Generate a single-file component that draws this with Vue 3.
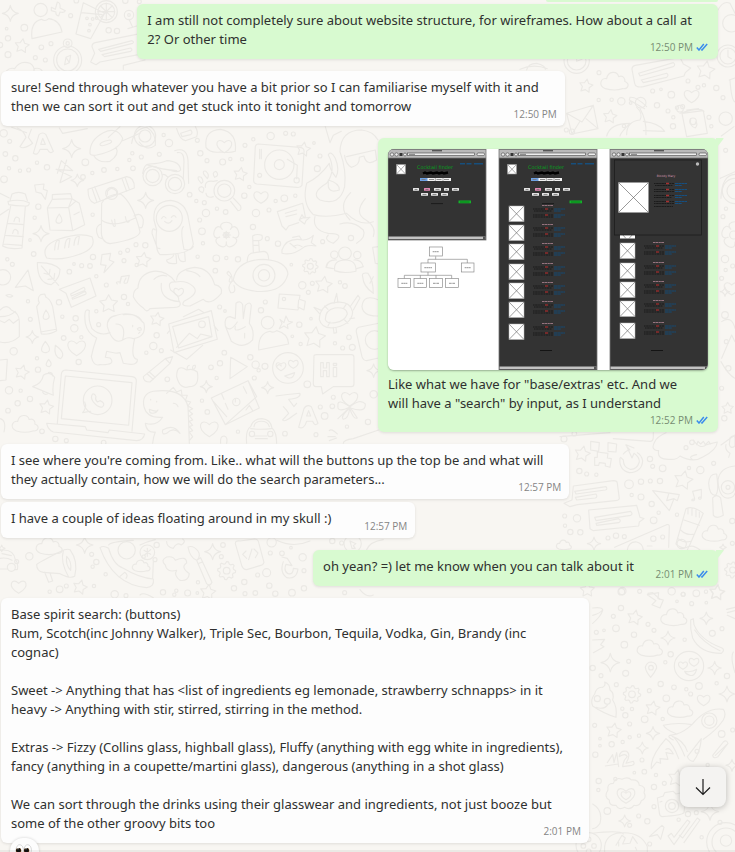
<script setup>
const messages = [
  { id: 1, side: 'out', size: 'wide', time: '12:50 PM', text: 'I am still not completely sure about website structure, for wireframes. How about a call at\n2? Or other time' },
  { id: 2, side: 'in', size: 'wide', time: '12:50 PM', text: 'sure! Send through whatever you have a bit prior so I can familiarise myself with it and\nthen we can sort it out and get stuck into it tonight and tomorrow' },
  { id: 3, side: 'out', size: 'media', tail: true, image: true, time: '12:52 PM', text: 'Like what we have for "base/extras\' etc. And we\nwill have a "search" by input, as I understand' },
  { id: 4, side: 'in', size: 'wide', time: '12:57 PM', text: "I see where you're coming from. Like.. what will the buttons up the top be and what will\nthey actually contain, how we will do the search parameters..." },
  { id: 5, side: 'in', size: 'short', follow: true, time: '12:57 PM', text: 'I have a couple of ideas floating around in my skull :)' },
  { id: 6, side: 'out', size: 'short', tail: true, time: '2:01 PM', text: 'oh yean? =) let me know when you can talk about it' },
  { id: 7, side: 'in', size: 'wide', reaction: true, time: '2:01 PM', text: 'Base spirit search: (buttons)\nRum, Scotch(inc Johnny Walker), Triple Sec, Bourbon, Tequila, Vodka, Gin, Brandy (inc\ncognac)\n\nSweet -> Anything that has <list of ingredients eg lemonade, strawberry schnapps> in it\nheavy -> Anything with stir, stirred, stirring in the method.\n\nExtras -> Fizzy (Collins glass, highball glass), Fluffy (anything with egg white in ingredients),\nfancy (anything in a coupette/martini glass), dangerous (anything in a shot glass)\n\nWe can sort through the drinks using their glasswear and ingredients, not just booze but\nsome of the other groovy bits too' },
]

const frames = [
  { x: 0, h: 91, rows: [] },
  { x: 111, h: 221, rows: [57, 76, 95, 115, 134, 153, 175] },
  { x: 222, h: 221, modal: true, rows: [94, 114, 133, 152, 174] },
]
const chips = [[25, 39, 6], [36, 39, 6, 1], [46, 39, 7], [56, 39, 5], [64, 39, 7], [33, 44, 7], [43, 44, 7], [53, 44, 7]]
const treeBoxes = [[148, 336, 39], [123, 384, 43], [244, 384, 38], [54, 431, 38], [102, 431, 38], [149, 431, 38], [197, 431, 38]]

/* Doodle helpers: each returns path data around a centre */
function polar(cx, cy, r, deg) {
  const a = (deg * Math.PI) / 180
  return `${(cx + r * Math.cos(a)).toFixed(1)} ${(cy + r * Math.sin(a)).toFixed(1)}`
}
function star([x, y, r, rot = 0]) {
  let d = ''
  for (let i = 0; i < 10; i++) d += (i ? 'L' : 'M') + polar(x, y, i % 2 ? r * 0.52 : r, -90 + rot + i * 36)
  return d + 'Z'
}
function spark([x, y, r]) {
  let d = `M${x} ${y - r}`
  for (let i = 1; i <= 4; i++) d += `Q${polar(x, y, r * 0.22, -225 + i * 90 + 90)} ${polar(x, y, r, -90 + i * 90)}`
  return d + 'Z'
}
function heart([x, y, r]) {
  return `M${x} ${y + r}C${x - r * 1.9} ${y} ${x - r} ${y - r * 1.5} ${x} ${y - r * 0.5}C${x + r} ${y - r * 1.5} ${x + r * 1.9} ${y} ${x} ${y + r}Z`
}
function cloud([x, y, r]) {
  return `M${x - r * 0.7} ${y + r * 0.55}C${x - r * 1.3} ${y + r * 0.3} ${x - r} ${y - r * 0.3} ${x - r * 0.6} ${y - r * 0.2}C${x - r * 0.5} ${y - r * 0.8} ${x + r * 0.2} ${y - r * 0.8} ${x + r * 0.3} ${y - r * 0.35}C${x + r * 0.7} ${y - r * 0.5} ${x + r * 0.8} ${y - r * 0.1} ${x + r * 0.75} ${y}C${x + r * 1.2} ${y + r * 0.2} ${x + r} ${y + r * 0.6} ${x + r * 0.6} ${y + r * 0.55}Q${x} ${y + r * 0.75} ${x - r * 0.7} ${y + r * 0.55}Z`
}
function flower([x, y, r]) {
  let d = ''
  for (let i = 0; i < 5; i++) {
    const a = -90 + i * 72
    d += `${i ? 'L' : 'M'}${polar(x, y, r * 0.45, a - 36)}C${polar(x, y, r * 1.25, a - 38)} ${polar(x, y, r * 1.25, a + 38)} ${polar(x, y, r * 0.45, a + 36)}`
  }
  return d + 'Z'
}
function gear([x, y, r]) {
  let d = ''
  for (let i = 0; i < 32; i++) d += (i ? 'L' : 'M') + polar(x, y, i % 4 < 2 ? r : r * 0.78, i * 11.25)
  return d + 'Z'
}

const patches = [
  {
    x: 0, y: 120,
    dots: [[11, 40, 11], [29, 64, 6], [16, 102, 7], [46, 115, 8], [27, 145, 5], [60, 152, 5], [86, 150, 6], [12, 178, 10], [111, 128, 5], [141, 142, 8], [256, 127, 10], [277, 159, 5], [249, 171, 7], [312, 150, 7], [352, 147, 5], [399, 145, 7], [388, 120, 5], [397, 100, 5], [424, 111, 6], [478, 103, 6], [507, 69, 11], [491, 45, 5], [592, 61, 6], [601, 100, 8], [621, 122, 6], [668, 126, 9], [691, 117, 5], [726, 118, 5], [735, 76, 6], [760, 58, 5], [812, 48, 11], [857, 40, 6], [880, 42, 6], [942, 69, 4], [960, 108, 6], [952, 146, 9], [115, 260, 8], [104, 293, 5], [278, 284, 5], [90, 360, 4], [101, 402, 7], [22, 418, 5], [37, 433, 6], [279, 411, 8], [222, 432, 4], [245, 437, 6], [270, 438, 7], [208, 455, 7], [289, 469, 5], [319, 495, 6], [361, 398, 5], [383, 391, 6], [408, 374, 6], [436, 376, 8], [372, 422, 6], [410, 435, 5], [569, 224, 7], [589, 243, 5], [613, 248, 6], [618, 279, 11], [599, 300, 6], [606, 334, 10], [609, 370, 5], [593, 410, 5], [651, 266, 5], [677, 276, 7], [649, 415, 10], [679, 414, 5], [646, 452, 7], [714, 418, 8], [748, 201, 5], [733, 227, 8], [827, 243, 5], [853, 235, 10], [886, 227, 5], [768, 279, 11], [807, 270, 6], [759, 321, 8], [802, 356, 6], [834, 371, 8], [874, 434, 4], [968, 365, 6], [1053, 354, 8], [907, 496, 11], [937, 490, 6], [925, 517, 6], [1020, 487, 5], [1035, 498, 7], [84, 544, 5], [177, 547, 8], [91, 598, 6], [187, 590, 5], [227, 595, 8], [296, 614, 6], [289, 574, 5], [223, 625, 11], [191, 654, 7], [244, 652, 5], [41, 694, 11], [111, 715, 5], [114, 749, 8], [236, 726, 8], [372, 531, 8], [384, 552, 5], [470, 646, 8], [460, 678, 11], [439, 698, 5], [484, 692, 6], [659, 561, 6], [675, 573, 4], [783, 571, 8], [796, 546, 6], [898, 614, 8], [933, 596, 4], [877, 649, 4], [902, 672, 5], [1047, 652, 7], [1005, 670, 5], [1028, 684, 6], [1057, 682, 9], [633, 742, 7], [660, 730, 8], [673, 698, 7], [751, 712, 8], [767, 734, 11], [776, 751, 5], [763, 774, 6], [795, 739, 9], [650, 774, 5], [502, 778, 7], [62, 812, 5], [27, 811, 11], [90, 837, 8], [53, 850, 8], [24, 872, 7], [922, 793, 10], [974, 888, 10], [961, 861, 6], [997, 859, 7], [1000, 832, 6], [1041, 920, 5], [948, 944, 6], [126, 934, 7], [166, 957, 8], [199, 962, 6], [311, 968, 7], [606, 842, 5], [622, 876, 7], [714, 935, 5], [855, 941, 7], [1104, 906, 8], [1121, 823, 11]],
    stars: [[721, 163, 21, 10], [910, 88, 22, 10], [430, 420, 23, 8], [326, 552, 28], [471, 598, 21, 10], [971, 495, 26, 8], [944, 653, 33, 8], [66, 757, 22, 15], [139, 862, 22, 10]],
    sparks: [[215, 86, 27], [232, 181, 19], [437, 241, 24], [123, 341, 24], [97, 651, 19], [619, 800, 18], [803, 803, 18], [1121, 752, 20]],
    hearts: [[673, 78, 20], [783, 231, 19], [536, 516, 13], [230, 683, 24], [628, 926, 24], [843, 739, 13], [880, 732, 13], [1049, 836, 22]],
    clouds: [[76, 912, 38]],
    flowers: [[679, 345, 46]],
    gears: [[931, 439, 23]],
    rings: [[435, 48, 18], [435, 48, 32], [458, 168, 29], [458, 168, 20], [525, 192, 29], [525, 192, 20], [673, 212, 31], [673, 212, 20], [838, 134, 44], [838, 134, 15], [508, 295, 39], [792, 466, 33], [792, 466, 17], [679, 345, 8], [931, 439, 9], [1035, 400, 19], [1003, 404, 11], [1072, 405, 11], [803, 608, 19], [864, 744, 46], [293, 841, 43], [606, 613, 10], [709, 846, 11], [756, 942, 8], [811, 942, 8], [335, 220, 18], [852, 537, 5], [1124, 660, 28], [9, 472, 23], [779, 166, 6], [890, 181, 8]],
    d: [
      'M100 100L117 44Q128 34 138 44L160 94Q150 104 142 88H120Q114 108 100 100M122 73L128 55 136 73Z',
      'M35 22L80 38M52 24Q70 30 78 52L60 80Q70 90 98 70L85 52 94 28',
      'M270 100Q268 60 310 38Q350 18 368 55Q360 90 290 105Q272 108 270 100M300 74Q298 66 330 60Q340 64 330 70Q304 82 300 74M282 108Q295 130 330 124Q360 104 348 82M325 52L360 20M368 62L420 40',
      'M395 70Q402 26 440 22Q470 40 466 76Q440 96 418 66',
      'M530 26Q540 60 556 62L590 50Q596 36 586 20M542 40L572 30Q580 38 572 44L546 50Z',
      'M618 82Q612 30 662 28Q712 36 706 94Q690 100 660 96Q630 100 618 82Z',
      'M775 72L900 82Q914 84 912 96L906 196Q902 204 890 202L770 192Q760 190 761 180L766 80Q768 72 775 72ZM862 118L892 136 890 176M779 88V116M784 88V116',
      'M1020 95Q1022 30 1085 30Q1120 34 1134 60M1020 95Q1040 150 1034 200Q1020 260 960 240Q930 220 980 190Q1010 150 985 105Q992 90 1006 115Q1020 150 1008 172Q990 150 988 130Q960 170 920 190Q905 250 940 284Q980 295 1040 280Q1080 320 1120 305M1040 110L1126 90 1130 120Q1100 140 1092 108L1078 112Q1080 136 1054 142Q1036 130 1034 106M945 290Q935 330 985 340Q1040 340 1000 370Q970 360 985 345M1020 312Q1060 300 1090 330Q1100 350 1070 370M985 180Q1020 190 1018 210Q990 220 985 200ZM1052 218Q1010 260 1050 300M1096 236Q1060 280 1098 300Q1130 320 1120 350',
      'M172 160L184 122 218 152 168 148 215 170 180 188 200 120M104 195L132 192 130 208 142 212 136 238 124 220 108 216Z',
      'M30 242L36 222Q56 212 76 222L82 242M24 244Q60 236 88 248Q88 260 74 258Q46 258 26 254ZM32 258L8 378Q30 390 66 384L76 260M22 310L72 314M16 346L70 350M10 372L66 376M42 304Q46 284 58 296V305M38 340Q42 320 54 334V342M0 220L28 234M0 285L26 268',
      'M157 238V224L212 221 216 236M157 238L142 264 150 330 218 332 254 314 238 250 216 236ZM142 264L206 262 216 236M206 262L218 332M206 262L226 245M178 282Q158 310 178 310Q194 306 178 282ZM222 284L238 276',
      'M140 414Q120 380 175 358Q240 336 276 350Q290 380 250 398Q190 424 140 414ZM164 390Q165 358 178 362L174 388M194 384Q196 352 210 356L206 382M222 376Q224 346 238 350L234 374',
      'M264 208L380 170Q404 172 403 204L284 250Q264 246 264 208ZM276 204L290 244M284 200L300 240M376 174L388 208M366 176L380 214M305 250Q320 222 362 222Q400 250 420 335Q420 356 330 371Q302 366 304 330ZM304 300Q340 326 406 294M335 300Q340 325 346 318L344 298M376 290Q380 314 388 304M304 312Q280 320 296 352L306 356M402 288Q424 274 430 300Q430 330 418 322M322 224V214Q334 196 350 214V224',
      'M428 160Q432 130 450 132Q480 130 500 122Q540 124 542 150Q534 160 508 150M488 164Q494 160 504 172M524 92Q560 80 564 120L566 190M532 98Q552 94 552 124L550 176M440 134Q490 150 530 152',
      'M616 202Q614 180 640 184L652 182M640 230Q620 236 618 220M692 244L714 272Q726 272 722 258L700 234M612 164Q606 150 618 154Q630 164 622 176ZM644 172Q634 158 648 154Q660 166 644 172ZM596 180Q590 166 604 172Q614 186 604 190ZM600 214Q590 202 606 200Q616 204 608 218Z',
      'M462 300Q458 244 512 241Q560 246 566 300L580 372Q576 404 480 404Q464 390 470 330ZM456 340Q456 320 466 330M456 340L472 384L480 386M550 320Q540 330 552 388Q570 394 580 380M520 402Q524 412 500 420Q500 434 530 430L528 404M534 402Q536 430 556 424L554 396M485 296Q490 284 498 294M514 292Q522 282 528 292M494 304Q506 316 516 302',
      'M672 338L688 352M688 338L672 352M679 334V356M668 345H692',
      'M700 480Q710 420 790 418Q860 422 864 462Q850 520 770 514Q714 508 700 480ZM742 426Q740 398 764 398L792 394Q806 396 806 418M760 396L758 348Q770 340 786 346Q790 362 776 362L778 394M760 362H776M760 376H776M700 482Q680 494 692 470Q674 460 686 454Q698 464 696 484Q680 500 692 518Q710 520 702 496',
      'M832 275L908 250 916 290 900 298M832 275L846 318 858 330 866 318 896 308M856 280L890 270M858 290L890 282M898 300L906 284 912 294 930 292 918 302 914 312 906 306Z',
      'M846 390Q860 350 910 360Q930 358 940 346L934 368 948 378Q930 374 914 380Q880 408 846 400ZM878 352L898 348 904 358M870 370L888 384M880 380Q892 370 906 380',
      'M1004 452Q1000 420 1036 420Q1070 420 1068 454Q1030 462 1004 452ZM980 440Q984 418 1010 420M990 424Q980 428 978 442L1000 446M1062 420Q1084 418 1090 440L1070 446',
      'M84 450L100 512 76 498 46 502ZM112 428Q160 426 180 448Q180 476 154 494Q112 490 112 428ZM124 438L176 496M132 460L148 464 150 448M144 478L162 476 164 460',
      'M178 508L270 474 288 528 214 562 198 520ZM212 522L252 502Q258 508 252 512L214 528ZM216 534L256 514Q262 522 254 524L218 538Z',
      'M306 404L332 400 328 420 342 426 312 458 318 436 302 434ZM352 492Q344 484 360 486L364 470 388 466 382 488Q368 494 374 482L378 474M364 474L360 490',
      'M400 530Q400 510 414 504Q416 462 460 454Q500 450 526 486Q500 484 512 510Q540 530 536 540Q550 560 524 562L450 566Q440 580 430 564Q410 550 400 530ZM526 486Q560 480 580 500Q600 520 552 544Q540 560 570 558L610 538Q630 560 664 520Q670 500 644 494Q630 444 584 442Q530 450 530 480M484 490Q478 540 538 545M462 478Q480 462 500 468M560 452Q590 456 600 470',
      'M118 548Q110 534 122 524L134 522 138 532Q150 536 158 560L170 632Q150 644 124 642L110 560ZM138 570Q120 600 140 598Q156 594 138 570ZM122 636L168 628',
      'M0 570Q20 550 34 570Q58 580 58 604V650Q30 674 0 666M0 602L14 608 28 598 40 610 56 598M0 590Q30 590 46 574M18 526Q30 520 38 528Q30 536 18 526Z',
      'M268 572Q250 560 256 610Q262 640 290 654Q280 680 274 710Q280 740 300 734Q350 736 330 714L316 712 320 694Q350 702 360 698L370 730Q414 740 412 718Q390 716 404 656M268 572Q264 600 276 626Q300 650 330 638M322 620Q320 590 350 586Q400 570 432 610Q440 650 400 656Q384 650 372 658Q340 680 322 620ZM348 612Q380 612 368 660M370 584Q410 580 424 600M412 626Q424 618 424 630Q414 634 412 626ZM398 616V620M420 636L416 640',
      'M506 612L634 572 652 658 522 698ZM518 620L626 590 636 650 536 684ZM530 682L568 640 592 656 602 642 634 650M550 590L596 568 612 578M502 640L510 630M512 690L560 718 608 676M642 616L654 632',
      'M676 618Q672 590 690 590L706 596 708 550Q722 540 728 554L730 596 736 556Q750 542 754 556L748 610Q764 630 758 660Q730 690 694 664ZM676 618Q690 640 712 606M706 620Q700 640 736 620M734 640V654',
      'M776 690Q774 640 810 634Q820 640 830 632Q864 640 866 672ZM840 598L852 608 858 588 866 604 878 606 862 614 864 626 852 618 838 626 846 610Z',
      'M838 522L900 526 898 538 916 544 912 570 896 562 894 570 834 564ZM896 540L894 562',
      'M958 598Q960 556 1002 548Q1050 540 1058 576Q1056 610 1010 622Q966 630 958 598ZM976 598Q976 570 1004 564Q1040 560 1042 582Q1034 604 1006 608Q980 612 976 598ZM1002 550L1010 520 1014 548M1052 558L1074 526 1080 534 1060 570M966 572L942 562 958 580M1000 622L1002 640 1010 638 1008 622M1050 596L1064 594M984 568L974 558M1030 566L1038 554M1034 600L1044 610M990 606L984 618',
      'M136 664Q112 698 138 698Q160 694 136 664ZM166 676Q160 710 182 716Q200 700 166 676ZM146 718Q130 740 148 740Q160 734 146 718Z',
      'M430 770L496 716 518 710 510 730 450 786Q430 786 430 770ZM442 762L460 778M448 756L466 772M496 716L510 730M560 750Q530 730 530 770Q540 810 568 800Q600 800 592 756Q580 744 560 750ZM562 750Q560 738 568 736M578 748Q576 734 586 736Q588 746 578 748Z',
      'M692 712L742 740 690 776ZM942 708Q942 704 950 704H1054Q1062 704 1062 712V792Q1062 800 1054 800H1000L968 822 964 800H948Q940 800 940 790ZM962 728H970V744H980V728H988V770H980V752H970V770H962ZM1000 742H1010V770H1000ZM1000 730H1010V736H1000Z',
      'M98 800Q126 790 130 766Q148 752 164 772Q156 800 160 826ZM128 816Q132 826 142 822M144 760Q146 754 156 760L158 768M0 720L22 718 18 780 0 782M0 896Q20 900 12 936',
      'M172 910L184 762Q186 750 198 750L396 770Q410 772 409 784L396 934M184 896L196 768 396 788 386 916ZM140 910L256 920 260 930 324 938 328 930 434 942Q430 962 410 962L160 936Q144 930 140 910ZM248 878Q262 862 254 846M248 878L272 874',
      'M278 822Q270 832 280 846Q296 866 308 860Q318 850 300 842L292 846Q284 838 288 830Q284 820 278 822Z',
      'M432 860Q424 822 460 814Q550 802 564 860Q566 900 568 970M432 860Q440 896 488 892Q470 920 436 910Q440 940 466 936Q460 950 458 970M448 868Q470 878 474 870Q466 884 450 878ZM500 820L520 802 530 816 544 810 546 826 562 826 556 842 572 846 564 858 578 866 566 872 578 882 568 888 578 900 568 904 578 916 568 920 578 932 568 936 578 950 570 960M520 850Q530 850 534 860M488 930Q520 910 540 940M540 940Q520 920 500 940Q484 946 488 930M452 838V840M470 844V846',
      'M634 834L744 782 778 864 676 914ZM664 820L672 838M676 850L684 868M640 844L680 890M744 782L770 830 676 914M738 870L748 856 758 872M706 838V846M730 800L740 820',
      'M832 738Q836 730 844 738M854 768Q870 764 884 758Q880 776 866 774Z',
      'M740 970Q736 930 752 920Q760 896 786 896Q812 898 816 924Q830 936 830 970M752 926Q784 930 814 926M762 920Q764 904 784 904Q804 904 808 920M764 948H800M766 956H802',
      'M828 828Q860 824 900 820Q904 834 866 838L882 860 890 850M850 860Q860 870 866 880L848 900Q854 908 878 888L890 880M896 922L912 866Q920 852 934 860L954 910Q944 920 938 904H920Q912 930 896 922ZM920 888L926 872 932 888Z',
      'M1049 860Q1012 834 1014 856Q1010 880 1049 862Q1080 834 1096 852Q1098 880 1052 864M1049 864Q1020 890 1030 898Q1046 896 1049 864M1049 864Q1060 900 1072 894L1052 864M1049 862L1014 896',
      'M1136 610L1076 622Q1066 626 1070 640L1086 710Q1090 722 1100 722L1136 714M1136 380L1118 382 1126 430 1136 432M1088 470Q1090 500 1120 520M1088 470Q1084 456 1104 460Q1120 480 1120 520M1120 470L1110 490M1136 540Q1090 520 1086 560Q1090 590 1136 588',
      'M988 932Q994 924 1012 942M984 950H1006M988 962L1010 954M1030 970Q1030 960 1060 956L1136 930M662 970Q660 948 672 948Q684 950 680 970M976 20L990 68 1000 46 1024 34M178 24L188 40 262 26',
    ],
  },
  {
    x: 560, y: 430,
    dots: [[12, 27, 9], [43, 11, 7], [58, 123, 8], [80, 132, 6], [109, 134, 5], [270, 87, 8], [278, 109, 6], [308, 115, 10], [207, 163, 13], [243, 155, 8], [271, 153, 6], [300, 153, 8], [215, 195, 5], [243, 201, 9], [275, 222, 8], [281, 271, 10], [296, 248, 5], [387, 114, 5], [421, 120, 11], [378, 53, 6], [396, 37, 7], [461, 100, 6], [351, 254, 5], [14, 258, 6], [51, 265, 11], [31, 306, 8], [61, 307, 8], [15, 287, 5], [144, 324, 6], [168, 317, 8], [193, 320, 6], [280, 326, 8], [308, 321, 6], [517, 340, 6], [517, 273, 8], [239, 484, 6], [335, 484, 11], [370, 493, 6], [409, 490, 10], [438, 485, 5], [187, 483, 11]],
    stars: [[67, 72, 24, 12], [370, 151, 29, 12], [471, 488, 22, 8]],
    sparks: [[102, 341, 20], [489, 352, 10]], hearts: [], clouds: [[464, 310, 36], [12, 345, 22]], flowers: [], gears: [[518, 420, 24]],
    rings: [[504, 172, 20], [504, 172, 6], [518, 420, 9], [365, 342, 14]],
    d: [
      'M92 34L118 38 116 64 92 60ZM144 38L170 42 168 66 144 64ZM112 66L144 70 142 84 154 86 150 112 136 108 136 100 118 98 116 106 104 106 104 82 112 82Z',
      'M180 84Q176 120 208 128Q246 126 248 92Q244 74 232 68M190 72Q200 60 210 60L198 46M222 54L198 44 216 84 222 70Q238 80 238 96Q230 120 210 118Q190 112 190 90L182 82',
      'M40 168L160 152Q172 152 172 160L178 206Q176 212 166 212L52 224 30 230 12 220 36 210ZM44 184L138 170Q144 178 136 180L48 192ZM46 202L108 192Q114 200 106 204L50 210Z',
      'M86 240L230 226 240 262 252 266 238 276 236 288 100 302 90 296ZM104 262L212 244Q220 252 212 256L108 272ZM108 280L176 266Q186 272 176 278L110 286Z',
      'M278 182L358 194 352 212 342 206 328 242ZM326 192L320 212 342 206M404 206L398 184 424 178 424 202M404 208Q394 206 396 212Q404 214 404 206ZM424 202Q414 200 416 206Q424 210 424 202Z',
      'M378 236Q400 226 430 250L388 348Q370 362 348 342ZM384 236V252M396 236V256M408 240V260M418 246V262M372 270L418 286M362 300Q380 318 404 312M354 326Q370 340 392 334',
      'M164 352L320 284Q328 282 328 290L326 352M0 20L150 8M160 26L270 34Q280 34 280 20V8M202 360Q206 334 230 336Q248 340 250 360M262 348H276',
      'M284 36Q270 60 296 62Q290 90 330 88Q350 90 360 78Q400 100 430 80Q470 60 472 36L440 44Q420 60 400 30M318 8Q290 20 284 36M410 44L414 34 422 42 430 34 436 44 446 34 452 42M400 90Q380 80 410 74M498 44Q494 60 510 70M510 24Q520 14 525 22V48Q512 58 508 44ZM510 70L506 82',
      'M474 150Q480 112 525 108M474 150Q476 200 500 204Q520 206 525 190M470 132Q448 130 446 160Q448 196 466 196Q476 190 472 150ZM458 204L460 256Q470 268 490 256L482 204Q470 190 458 204Z',
      'M264 490L278 488 300 508M380 366L386 350Q400 344 420 360',
    ],
  },
  {
    x: 560, y: 590,
    dots: [[184, 5, 10], [183, 54, 8], [160, 79, 6], [132, 121, 4], [168, 115, 10], [109, 127, 6], [222, 134, 8], [193, 164, 10], [264, 103, 6], [282, 121, 6], [332, 193, 8], [316, 217, 5], [374, 149, 5], [369, 13, 6], [395, 41, 6], [439, 38, 4], [351, 34, 4], [457, 130, 9], [486, 116, 6], [98, 234, 8], [206, 214, 6], [123, 257, 6], [197, 250, 9], [169, 284, 6], [268, 302, 6], [302, 282, 8], [342, 292, 7], [379, 298, 5], [417, 288, 10], [392, 312, 6], [319, 325, 10], [470, 280, 5], [501, 258, 8], [187, 356, 5], [216, 357, 5], [196, 376, 8], [254, 388, 10], [308, 387, 5], [104, 406, 6], [120, 446, 4], [120, 467, 4], [209, 402, 6], [237, 437, 5], [209, 442, 5], [188, 456, 5], [155, 463, 8], [106, 494, 8], [246, 510, 6], [253, 545, 7], [223, 548, 4], [288, 555, 5], [116, 573, 8], [166, 567, 5], [115, 600, 5], [282, 591, 8], [313, 580, 6], [485, 432, 10], [411, 484, 6], [443, 525, 5], [142, 663, 10], [236, 678, 6], [282, 650, 6], [262, 694, 8], [209, 706, 6], [269, 762, 6], [384, 672, 8], [409, 668, 6], [425, 742, 5], [356, 689, 5], [480, 697, 6], [518, 420, 6]],
    stars: [[224, 83, 23, 12], [161, 422, 23, 10], [278, 355, 22, 10], [350, 565, 26, 10], [471, 8, 24, 8], [82, 0, 22, 0]],
    sparks: [[439, 85, 19], [324, 144, 21], [151, 218, 28], [464, 234, 20], [501, 312, 24], [279, 430, 20], [247, 474, 18], [194, 693, 18], [450, 665, 26], [516, 526, 18]],
    hearts: [[198, 616, 24], [198, 616, 13], [369, 226, 12], [402, 216, 13], [431, 330, 17]],
    clouds: [[342, 82, 38], [270, 175, 37], [361, 358, 37]],
    flowers: [], gears: [[216, 313, 26]],
    rings: [[216, 313, 10], [273, 233, 7], [387, 228, 44], [448, 392, 23], [448, 392, 14], [112, 326, 9], [142, 334, 9], [336, 648, 20], [336, 648, 10], [498, 756, 58], [498, 756, 42], [498, 752, 17], [86, 766, 38], [86, 748, 7], [70, 768, 7], [102, 768, 7], [86, 784, 7]],
    d: [
      'M262 14L296 8 294 26 310 30 300 54 276 44 288 32Z',
      'M392 90L400 86 402 104Q420 150 486 174Q496 180 484 190Q420 190 398 144Q390 116 392 90ZM404 120Q430 160 480 182',
      'M374 244Q396 248 410 238Q404 260 390 256Q378 254 374 244ZM256 232Q260 216 274 216Q290 218 290 234Q284 248 272 262Q258 246 256 232Z',
      'M98 348Q90 330 104 312Q110 290 128 292Q138 286 134 276Q150 282 150 300Q164 310 158 330Q172 350 168 382Q130 370 98 348ZM108 352Q130 360 142 346M98 150L134 148 122 164 132 170 100 188M98 54Q130 50 128 62Q122 80 98 100M98 76Q120 70 128 60',
      'M310 406Q350 396 396 404Q372 426 350 432Q318 420 310 406ZM352 432L330 436Q320 440 340 450M396 404Q440 350 490 358Q500 370 490 390Q470 420 430 448M424 446L382 500Q388 514 400 514Q420 490 424 446ZM330 436Q350 440 374 498M318 446Q340 460 356 506M274 536Q270 500 318 446M274 536L290 516 302 520 300 506 324 508 318 488 340 492Q330 470 318 478M338 440Q370 450 382 484',
      'M458 496L490 456Q500 448 504 460L474 500Q460 508 458 496ZM466 496L500 464M500 58L525 52M502 68L525 62M502 76L525 86M520 186Q510 200 525 248',
      'M142 518L158 494 162 518 170 488 176 530M136 528L174 522M178 500Q180 480 200 484Q214 494 198 520L220 514Q226 524 216 526L188 530Q190 510 202 500Q196 488 178 500Z',
      'M144 600Q140 580 160 580Q166 560 186 568Q204 558 214 570Q236 568 238 586Q260 590 252 608Q262 624 244 632Q240 650 222 646Q210 662 194 652Q176 662 168 646Q146 648 148 630Q130 620 144 600Z',
      'M292 624L310 618 314 608 340 604 348 612 374 606Q380 610 378 618L372 668Q366 676 306 680Q298 676 298 668ZM300 636L306 634',
      'M268 740L306 706 312 712 302 748 292 734ZM324 738L334 730 342 742 382 690 390 696 342 764ZM358 736L368 744 412 684 420 690 372 758',
      'M134 786Q130 740 170 730Q240 720 262 770V786M168 766L186 736 196 744 188 762 210 760 218 740 232 760M98 730Q180 720 190 732M98 642Q130 660 120 700Q110 716 98 716M176 756V768M226 772L230 780',
    ],
  },
  {
    x: 500, y: 0,
    dots: [[458, 273, 6], [483, 268, 4], [514, 284, 10], [564, 243, 6], [594, 262, 6], [612, 256, 5], [649, 264, 8], [669, 293, 6], [471, 316, 8], [504, 333, 6], [531, 323, 5], [548, 320, 6], [297, 218, 6], [296, 300, 5], [335, 299, 5], [364, 304, 11], [392, 309, 4], [372, 378, 5], [519, 379, 8], [540, 326, 10], [627, 352, 6], [634, 379, 5], [520, 352, 5], [199, 390, 6], [216, 395, 8]],
    stars: [[258, 258, 21, 10], [330, 350, 21, 8], [617, 211, 28, 10]],
    sparks: [], hearts: [[575, 288, 20]], clouds: [[344, 244, 40]], flowers: [], gears: [],
    rings: [[230, 182, 38], [230, 182, 28], [422, 308, 16], [684, 168, 33], [684, 168, 24], [579, 364, 10], [677, 356, 20], [694, 70, 26]],
    d: [
      'M396 208Q396 198 406 196L540 172 550 192 572 204 556 218 552 228 430 260Q406 264 404 250ZM416 220L520 188Q528 194 520 200L420 228ZM424 240L500 220Q508 226 500 232L430 248Z',
      'M200 340L280 316 294 386 216 402ZM200 340L246 366 280 316M216 402L240 364M294 386L258 356',
      'M390 292Q410 290 440 320M390 292L388 300 434 326M420 326Q440 360 438 404M410 322Q430 340 420 360Q380 364 380 404M430 364Q480 370 494 394L430 392M320 408Q330 370 390 370Q360 400 360 408',
      'M546 340L610 332 622 400 560 410ZM560 330L596 326M572 356Q568 380 586 384Q596 370 586 366M540 340Q600 320 612 334M684 150V170L694 176M230 168V184L246 178M664 408L702 380',
      'M80 210Q84 190 110 190Q136 196 136 208M60 208Q100 190 142 206M654 30Q670 0 690 10L705 40',
      'M688 240L705 234M690 240Q694 300 705 306',
    ],
  },
  {
    x: 0, y: 0,
    dots: [[20, 86, 4], [24, 115, 8], [73, 83, 10], [0, 135, 8], [24, 164, 9], [124, 142, 7], [153, 131, 6], [106, 173, 6], [136, 180, 6], [212, 47, 6], [229, 2, 7], [326, 91, 8], [351, 93, 8], [376, 2, 8], [418, 5, 6], [261, 55, 4], [278, 57, 4], [290, 54, 4], [270, 74, 4], [267, 92, 4]],
    stars: [[66, 138, 22, 8]], sparks: [[31, 40, 24]], hearts: [], clouds: [], flowers: [], gears: [],
    rings: [[122, 30, 20], [319, 35, 33], [319, 35, 25], [319, 35, 4], [203, 180, 42], [203, 180, 33], [203, 130, 13], [203, 130, 5], [387, 45, 14], [387, 45, 4]],
    d: [
      'M96 116Q90 66 124 58Q136 66 146 56Q180 60 186 96ZM154 22L166 28 172 6Q182 8 180 24L196 32Q192 40 180 36L176 48Q166 46 168 36L154 32Z',
      'M250 8L314 40 272 116 228 102ZM244 38L306 44M319 10V60M294 35H344M302 18L336 52M336 18L302 52',
      'M194 194L198 172 212 166 208 188ZM198 172L208 188M387 58L398 82M384 86L410 78',
      'M276 140Q276 130 286 128L435 98M276 140L284 160 272 186 288 194 300 186 435 160M296 148L396 122Q404 126 398 130L302 154ZM306 164L392 144Q400 150 392 154L314 170ZM370 208V196L435 180',
      'M20 212Q30 202 44 206M44 206Q60 180 90 190Q104 200 102 212M102 206Q120 202 126 212',
    ],
  },
  {
    x: 0, y: 495,
    dots: [[88, 184, 11], [50, 200, 6], [275, 178, 6], [289, 201, 8], [317, 238, 5], [278, 215, 5], [179, 283, 10], [199, 273, 6], [149, 290, 5], [282, 273, 5], [344, 298, 11], [378, 302, 6], [431, 185, 5], [465, 194, 6], [489, 292, 8], [523, 299, 5], [470, 150, 8], [529, 287, 5], [563, 294, 9], [594, 262, 5], [592, 294, 4], [664, 185, 6], [669, 150, 7], [702, 280, 8], [733, 261, 8], [735, 296, 6], [773, 240, 6], [800, 233, 12], [808, 272, 8], [815, 142, 14], [811, 174, 6], [846, 175, 7], [873, 158, 4], [908, 187, 11], [912, 227, 6], [912, 280, 8], [826, 296, 8], [876, 293, 10], [766, 294, 7], [997, 138, 8], [1025, 144, 6], [1034, 293, 6]],
    stars: [[240, 277, 22, 15], [624, 292, 24, 8]], sparks: [[254, 150, 25], [638, 170, 24], [5, 160, 10]],
    hearts: [[56, 275, 20]], clouds: [[148, 154, 38], [424, 213, 26]], flowers: [], gears: [[680, 227, 27]],
    rings: [[380, 166, 26], [442, 172, 22], [680, 227, 10], [34, 217, 12], [1058, 146, 26]],
    d: [
      'M0 166Q40 160 46 194Q56 204 52 224H44M24 222H0M0 190Q20 186 36 196M6 176L34 182',
      'M110 208Q120 200 180 170Q200 160 210 164Q236 200 224 244Q210 252 180 236L130 232Q110 230 110 208ZM190 168Q180 200 206 246M134 232L146 262 158 258 150 234M200 184Q216 200 212 226Q196 210 200 184Z',
      'M300 158Q310 150 326 160Q340 210 370 220Q420 250 460 252Q464 276 440 278Q340 270 300 158ZM326 150Q330 140 400 136M420 150Q440 140 466 134M460 200L458 250M432 166L452 178M452 164L434 180M442 160V184',
      'M500 140Q500 156 520 160Q530 140 544 150Q560 140 548 132M496 210Q480 196 500 186Q520 182 526 196Q560 180 560 204Q540 216 568 236Q566 260 540 256Q520 240 530 226Q500 234 496 210Z',
      'M564 156Q580 150 594 168Q604 184 590 196Q570 188 564 156ZM590 196L602 188 636 262Q630 276 620 266ZM594 206L608 200M706 146Q706 136 720 138L764 132Q774 132 776 142L792 202Q790 210 780 212L740 224Q730 224 726 214ZM738 168L728 178 740 190M762 162L774 174 766 188M756 162L746 194',
      'M850 200Q838 232 860 248Q890 254 894 222L880 220Q880 240 864 236Q850 228 858 208L876 212 862 190 846 186M830 136Q880 160 930 138M1050 138L1068 146 1060 152 1066 160 1056 160ZM1100 164Q1110 140 1150 134M1080 284Q1100 310 1120 300M420 300Q430 290 460 308M360 244L374 232Q386 240 378 250',
    ],
  },
  {
    x: 555, y: 135,
    dots: [[504, 245, 6], [513, 221, 5], [510, 372, 11], [533, 393, 6], [512, 405, 5], [500, 430, 6], [510, 540, 10], [520, 700, 8], [500, 760, 6], [514, 620, 6], [508, 850, 8], [512, 46, 6]],
    stars: [[518, 820, 18]], sparks: [[510, 470, 14]], hearts: [[530, 460, 20]], clouds: [], flowers: [[540, 300, 48]], gears: [],
    rings: [[540, 168, 38], [540, 168, 24], [536, 300, 12]],
    d: ['M496 130L540 110M498 190Q500 120 540 118M500 670L530 600 540 620M498 680Q520 720 540 730M500 560Q530 540 540 580M498 930L540 900'],
  },
]
</script>

<template>
  <main class="chat">
    <svg class="wallpaper" aria-hidden="true">
      <g v-for="(p, i) in patches" :key="i" :transform="`translate(${p.x} ${p.y}) scale(.3333)`">
        <circle v-for="(c, j) in p.dots" :key="'d' + j" :cx="c[0]" :cy="c[1]" :r="c[2]" />
        <circle v-for="(c, j) in p.rings" :key="'r' + j" :cx="c[0]" :cy="c[1]" :r="c[2]" />
        <path v-for="(s, j) in p.stars" :key="'s' + j" :d="star(s)" />
        <path v-for="(s, j) in p.sparks" :key="'k' + j" :d="spark(s)" />
        <path v-for="(s, j) in p.hearts" :key="'h' + j" :d="heart(s)" />
        <path v-for="(s, j) in p.clouds" :key="'c' + j" :d="cloud(s)" />
        <path v-for="(s, j) in p.flowers" :key="'f' + j" :d="flower(s)" />
        <path v-for="(s, j) in p.gears" :key="'g' + j" :d="gear(s)" />
        <path v-for="(d, j) in p.d" :key="'p' + j" :d="d" />
      </g>
    </svg>

    <div class="messages">
      <div class="earlier"></div>
      <article v-for="m in messages" :key="m.id" class="bubble" :class="[m.side, m.size, { follow: m.follow }]">
        <svg v-if="m.tail" class="tail" viewBox="0 0 8 10" aria-hidden="true"><path d="M0 0H7Q8 0 7.400 1L2 8V10H0Z" /></svg>

        <svg v-if="m.image" class="photo" viewBox="0 0 320 221" role="img" aria-label="Wireframes">
          <rect width="320" height="221" fill="#fff" />
          <g v-for="f in frames" :key="f.x" :transform="`translate(${f.x} 0)`">
            <rect width="98" :height="f.h" fill="#333" />
            <rect width="98" height="9" fill="#b9b9b9" />
            <path d="M0 .5H98M0 9H98" stroke="#777" stroke-width=".8" />
            <rect x="44" y="1" width="10" height="1.400" fill="#555" />
            <g fill="#eee" stroke="#444" stroke-width=".6">
              <circle cx="4" cy="5.500" r="1.700" /><circle cx="8.500" cy="5.500" r="1.700" />
              <circle cx="17" cy="5.500" r="1.500" />
              <rect x="19.500" y="4" width="67" height="2.600" /><rect x="89" y="4" width="7.500" height="2.600" rx="1.200" />
            </g>
            <rect x="11.500" y="4" width="3" height="3" fill="#333" />
            <path d="M21 5.300h6" stroke="#777" stroke-width="1" />

            <g v-if="!f.modal">
              <rect x="8.500" y="15.500" width="9" height="9.500" fill="#fff" stroke="#999" stroke-width=".6" />
              <path d="M8.500 15.500l9 9.500m0-9.500l-9 9.500" stroke="#777" stroke-width=".6" />
              <path d="M72 14.700h5m1.500 0h5m2.500 0h9" stroke="#174f7d" stroke-width="1.400" />
              <text x="47" y="20" text-anchor="middle" class="brand">Cocktail finder</text>
              <path d="M35 24.500l2-1 2 1 4-1 2 1 4-1 2 1 3-1 2 1 4-1" stroke="#000" stroke-width="2.400" fill="none" />
              <rect x="32" y="29" width="31" height="3" fill="#f2f2f2" /><rect x="32" y="29" width="7.500" height="3" fill="#6ea2e4" />
              <path d="M33.500 30.500h4M41 30.500h5m2.500 0h5m2.500 0h5" stroke="#777" stroke-width=".8" />
              <path d="M47.300 29v3M55 29v3" stroke="#444" stroke-width=".4" />
              <g v-for="(c, k) in chips" :key="k">
                <rect :x="c[0]" :y="c[1]" :width="c[2]" height="2.700" rx=".5" :fill="c[3] ? '#e88bb8' : '#eee'" />
                <path :d="`M${c[0] + 1.5} ${c[1] + 1.4}h${c[2] - 3}`" stroke="#666" stroke-width=".8" />
              </g>
              <rect x="70.500" y="51.500" width="12.500" height="2.800" fill="#13b32a" />
              <path d="M72 53h9.500" stroke="#056c13" stroke-width=".8" />
              <path d="M43 54.600h12" stroke="#151515" stroke-width=".8" />
            </g>

            <g v-for="y in f.rows" :key="y">
              <rect x="10" :y="y" width="15" height="15.500" fill="#fff" stroke="#bbb" stroke-width=".5" />
              <path :d="`M10 ${y}l15 15.500m0-15.500l-15 15.500`" stroke="#777" stroke-width=".7" />
              <path :d="`M43 ${y - 0.5}h11`" stroke="#96747f" stroke-width="1" stroke-dasharray="2 .4 3 .4" />
              <path :d="`M34 ${y + 3}h20m-19 2h18m-19 4h20m-20 2h20`" stroke="#1b1b1b" stroke-width="1.200" stroke-dasharray="1.600 .6 2.500 .5" />
              <path :d="`M46 ${y + 3}h3m-3 6h3`" stroke="#8e2c2c" stroke-width="1.300" />
              <path :d="`M55 ${y + 3}h11m-11 2h7m-7 4h11m-11 2h7`" stroke="#154a75" stroke-width="1.200" stroke-dasharray="3 .3" />
            </g>
            <path v-if="f.rows.length" d="M41 201.500h12" stroke="#111" stroke-width=".9" />

            <g v-if="f.modal">
              <rect x="10" y="80" width="15" height="9.500" fill="#fff" /><path d="M12 85l4 4.500M23 85l-4 4.500" stroke="#777" stroke-width=".7" />
              <rect x="4.500" y="11" width="87" height="75" fill="#343434" stroke="#1d1d1d" stroke-width=".8" />
              <rect x="8.500" y="33.500" width="30" height="30" fill="#fff" stroke="#999" stroke-width=".6" />
              <path d="M8.500 33.500l30 30m0-30l-30 30" stroke="#555" stroke-width=".6" />
              <circle cx="87.500" cy="15" r="1.700" fill="#bbb" />
              <text x="56" y="27.500" text-anchor="middle" class="drink">Bloody Mary</text>
              <path d="M44 34.500h20m-19 2h18m-19 4h20m-20 2h20m-20 4h20m-20 2h18m-18 4h20m-20 2h20m-20 3h19" stroke="#1b1b1b" stroke-width="1.200" stroke-dasharray="1.600 .6 2.500 .5" />
              <path d="M56 34.500h3m-3 6h3m-3 6h3m-3 6h3" stroke="#a53030" stroke-width="1.300" />
              <path d="M65 34.500h12m-12 2h7m-7 4h12m-12 2h7m-7 4h12m-12 2h7m-7 4h12m-12 2h7" stroke="#154f80" stroke-width="1.200" stroke-dasharray="3 .3" />
            </g>
            <rect width="98" :height="f.h" fill="none" stroke="#777" stroke-width=".8" />
            <rect x=".5" :y="f.h - 3.5" width="97" height="2.600" fill="#c2c2c2" /><rect x="95" :y="f.h - 3.5" width="2.500" height="2.600" fill="#555" />
          </g>
          <g transform="translate(-8 -14) scale(.3333)" fill="#fff" stroke="#888" stroke-width="2">
            <path d="M167 364V373M144 384V373H262V384M144 411V421M73 431V421H215V431M121 421V431M168 421V431" fill="none" />
            <g v-for="(b, k) in treeBoxes" :key="k">
              <rect :x="b[0]" :y="b[1]" :width="b[2]" height="27" />
              <path :d="`M${b[0] + 10} ${b[1] + 14}h${b[2] - 20}`" stroke="#aaa" stroke-width="4" stroke-dasharray="6 1 4 1" />
            </g>
          </g>
        </svg>

        <p class="text"><span v-for="(line, k) in m.text.split('\n')" :key="k" class="line">{{ line }}</span></p>
        <div class="meta">
          <time>{{ m.time }}</time>
          <svg v-if="m.side === 'out'" class="ticks" viewBox="0 0 12 8" role="img" aria-label="Read">
            <path d="M.8 4.500L3 7 7.800 1M5.300 6.400L6 7 11.200 1" />
          </svg>
        </div>
        <button v-if="m.reaction" class="reaction" type="button" aria-label="Eyes reaction">
          <svg viewBox="0 0 18 12" aria-hidden="true">
            <ellipse cx="4.700" cy="6" rx="3.700" ry="5.300" fill="#fff" stroke="#c9c9c9" stroke-width=".7" />
            <ellipse cx="12.700" cy="6" rx="3.700" ry="5.300" fill="#fff" stroke="#c9c9c9" stroke-width=".7" />
            <circle cx="3.600" cy="6.600" r="2.700" fill="#8a4a12" /><circle cx="11.600" cy="6.600" r="2.700" fill="#8a4a12" />
            <circle cx="3.500" cy="6.200" r="2.300" fill="#111" /><circle cx="11.500" cy="6.200" r="2.300" fill="#111" />
            <circle cx="3" cy="4.700" r=".6" fill="#fff" /><circle cx="11" cy="4.700" r=".6" fill="#fff" />
          </svg>
        </button>
      </article>
    </div>

    <button class="jump" type="button" aria-label="Scroll to latest">
      <svg viewBox="0 0 16 18" aria-hidden="true"><path d="M8 1V16.500M1 9.500L8 16.500 15 9.500" /></svg>
    </button>
    <div class="composer-edge"></div>
  </main>
</template>

<style>
body {
  background: #f8f6f2;
}
</style>

<style scoped>
.chat {
  position: relative;
  height: 100vh;
  overflow: hidden;
  background: #f8f6f2;
  font-family: 'Segoe UI', 'Noto Sans', 'Open Sans', sans-serif;
  color: #2f302f;
}
.wallpaper {
  position: absolute;
  inset: 0;
  width: 100%;
  height: 100%;
  fill: none;
  stroke: #ebe9e5;
  stroke-width: 3.4;
  stroke-linejoin: round;
  stroke-linecap: round;
}
.messages {
  position: relative;
  display: flex;
  flex-direction: column;
  gap: 12px;
  padding: 0 17px 0 1px;
}
.earlier {
  align-self: flex-end;
  width: 172px;
  height: 2px;
  margin-bottom: -10px;
  border-radius: 0 0 6px 6px;
  background: #d8fad0;
}
.bubble {
  position: relative;
  align-self: flex-start;
  box-sizing: border-box;
  padding: 7px 26px 10px 10px;
  border-radius: 6px;
  background: #fdfdfd;
  box-shadow: 0 1px 3px rgba(0, 0, 0, 0.1);
}
.bubble.out {
  align-self: flex-end;
  background: #d8fad0;
}
.bubble.short {
  padding-right: 84px;
}
.bubble.media {
  padding: 11px 10px 19px;
}
.bubble.follow {
  margin-top: -9px;
}
.tail {
  position: absolute;
  top: 0;
  left: calc(100% - 2px);
  width: 8px;
  height: 10px;
  fill: #d8fad0;
}
.photo {
  display: block;
  width: 320px;
  margin-bottom: 5px;
  border-radius: 6px;
  box-shadow: 0 1px 2px rgba(0, 0, 0, 0.3);
}
.brand,
.drink {
  font-family: 'DejaVu Sans', sans-serif;
  font-size: 5px;
  fill: #06a01d;
}
.drink {
  font-size: 3px;
  fill: #d79bb2;
}
.text {
  margin: 0;
  font-size: 13px;
  line-height: 19px;
  white-space: pre;
}
.line {
  display: block;
  min-height: 19px;
}
.meta {
  position: absolute;
  right: 8px;
  bottom: 5px;
  display: flex;
  align-items: center;
  gap: 3px;
  font-family: 'Segoe UI', 'Open Sans', sans-serif;
  font-size: 10px;
  line-height: 14px;
  color: #858585;
}
.out .meta {
  right: 10px;
  color: #768c72;
}
.ticks {
  width: 12px;
  height: 8px;
  fill: none;
  stroke: #3b8cec;
  stroke-width: 1.5;
}
.reaction {
  position: absolute;
  top: calc(100% - 5px);
  left: 9px;
  display: flex;
  width: 29px;
  height: 26px;
  padding: 6px 5px;
  border: 0;
  border-radius: 13px;
  background: #fdfdfd;
  box-shadow: 0 0 3px rgba(0, 0, 0, 0.18);
}
.reaction svg {
  width: 18px;
  height: 12px;
}
.jump {
  position: absolute;
  right: 9px;
  bottom: 45px;
  display: grid;
  place-items: center;
  width: 46px;
  height: 40px;
  padding: 0;
  border: 0;
  border-radius: 8px;
  background: #f4f3f1;
  box-shadow: 0 1px 6px rgba(0, 0, 0, 0.25);
}
.jump svg {
  width: 16px;
  height: 18px;
  fill: none;
  stroke: #1c1c1c;
  stroke-width: 1.2;
}
.composer-edge {
  position: absolute;
  right: 0;
  bottom: 0;
  left: 0;
  height: 2px;
  background: rgba(0, 0, 0, 0.05);
}
</style>
